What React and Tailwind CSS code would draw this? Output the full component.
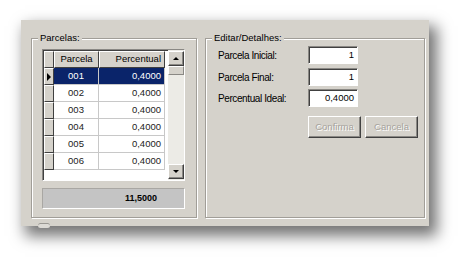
const rows = ["001", "002", "003", "004", "005", "006"];

function GroupBox({ title, className, children }) {
  return (
    <div
      className={`relative border border-[#a19e98] shadow-[inset_1px_1px_0_#fff,1px_1px_0_#fff] ${className}`}
    >
      <span className="absolute -top-[7px] left-[6px] bg-[#d5d2cb] px-[2px] leading-[12px] text-[9.5px] text-black">
        {title}
      </span>
      {children}
    </div>
  );
}

function Arrow({ up }) {
  return (
    <div className="flex h-[15px] w-[16px] items-center justify-center border border-t-white border-l-white border-r-[#404040] border-b-[#404040] bg-[#d5d2cb] shadow-[inset_-1px_-1px_0_#8a8884]">
      <div
        className={`h-0 w-0 border-x-[3px] border-x-transparent ${
          up ? "border-b-[3px] border-b-black" : "border-t-[3px] border-t-black"
        }`}
      ></div>
    </div>
  );
}

function Input({ value }) {
  return (
    <div className="flex h-[18px] w-[50px] items-center justify-end border border-t-[#8a8884] border-l-[#8a8884] border-r-white border-b-white bg-white pr-[3px] text-[9.5px] shadow-[inset_1px_1px_0_#404040]">
      {value}
    </div>
  );
}

function Button({ label }) {
  return (
    <div className="flex h-[22px] w-[53px] items-center justify-center border border-t-white border-l-white border-r-[#404040] border-b-[#404040] bg-[#d5d2cb] text-[9.5px] text-[#a6a39d] shadow-[inset_-1px_-1px_0_#8a8884] [text-shadow:1px_1px_0_#fff]">
      {label}
    </div>
  );
}

export default function App() {
  return (
    <div
      className="relative h-[268px] w-[471px] overflow-hidden bg-white pl-[21px] pt-[20px]"
      style={{ fontFamily: '"Liberation Sans", Arial, sans-serif' }}
    >
      <div className="flex h-[206px] w-[408px] gap-[8px] bg-[#d5d2cb] pl-[10px] pt-[18px] shadow-[6px_8px_14px_2px_rgba(0,0,0,0.55)]">
        {/* Parcelas */}
        <GroupBox title="Parcelas:" className="flex h-[180px] w-[166px] flex-col pl-[10px] pt-[10px]">
          <div className="flex h-[132px] w-[143px] border border-t-[#8a8884] border-l-[#8a8884] border-r-white border-b-white bg-white shadow-[inset_1px_1px_0_#404040]">
            <div className="flex w-[122px] flex-col pl-[1px] pt-[1px] text-[9.5px]">
              <div className="flex h-[17px]">
                <div className="w-[10px] border border-t-white border-l-white border-r-[#404040] border-b-[#404040] bg-[#d5d2cb]"></div>
                <div className="flex w-[45px] items-center justify-center border border-t-white border-l-white border-r-[#404040] border-b-[#404040] bg-[#d5d2cb]">
                  Parcela
                </div>
                <div className="flex w-[66px] items-center justify-end border border-t-white border-l-white border-r-[#404040] border-b-[#404040] bg-[#d5d2cb] pr-[3px]">
                  Percentual
                </div>
              </div>
              {rows.map((r, i) => {
                const sel = i === 0;
                return (
                  <div key={r} className="flex h-[17px]">
                    <div className="flex w-[10px] items-center justify-center border border-t-white border-l-white border-r-[#404040] border-b-[#404040] bg-[#d5d2cb]">
                      {sel && (
                        <div className="h-0 w-0 border-y-[4px] border-l-[4px] border-y-transparent border-l-black"></div>
                      )}
                    </div>
                    <div
                      className={`flex w-[45px] items-center justify-center border-r border-b border-[#c8c8c8] ${
                        sel ? "bg-[#0a246a] text-white" : "text-[#222]"
                      }`}
                    >
                      {r}
                    </div>
                    <div
                      className={`flex w-[66px] items-center justify-end border-r border-b border-[#c8c8c8] pr-[3px] ${
                        sel ? "bg-[#0a246a] text-white" : "text-[#222]"
                      }`}
                    >
                      0,4000
                    </div>
                  </div>
                );
              })}
            </div>
            <div className="ml-auto flex w-[16px] flex-col bg-[#ecebe6] pt-[1px] pb-[1px]">
              <Arrow up />
              <div className="h-[9px] w-[16px] border border-t-white border-l-white border-r-[#8a8884] border-b-[#8a8884] bg-[#d5d2cb]"></div>
              <div className="flex-1"></div>
              <Arrow />
            </div>
          </div>
          <div className="mt-[7px] flex h-[21px] w-[143px] items-center justify-end border border-t-[#a9a7a3] border-l-[#a9a7a3] border-r-white border-b-white bg-[#c4c4c4] pr-[27px] text-[9px] font-bold">
            11,5000
          </div>
        </GroupBox>

        {/* Editar/Detalhes */}
        <GroupBox title="Editar/Detalhes:" className="flex h-[180px] w-[220px] flex-col pl-[12px] pt-[7px]">
          <div className="flex items-center">
            <span className="w-[90px] text-[10px] tracking-[-0.4px]">Parcela Inicial:</span>
            <Input value="1" />
          </div>
          <div className="mt-[4px] flex items-center">
            <span className="w-[90px] text-[10px] tracking-[-0.4px]">Parcela Final:</span>
            <Input value="1" />
          </div>
          <div className="mt-[3px] flex items-center">
            <span className="w-[90px] text-[10px] tracking-[-0.4px]">Percentual Ideal:</span>
            <Input value="0,4000" />
          </div>
          <div className="mt-[9px] flex justify-end gap-[4px] pr-[6px]">
            <Button label="Confirma" />
            <Button label="Cancela" />
          </div>
        </GroupBox>
      </div>
      <div className="absolute left-[38px] top-[223px] h-[5px] w-[12px] rounded-full border-t border-[#9a9893] bg-[#dcdad5]"></div>
    </div>
  );
}
